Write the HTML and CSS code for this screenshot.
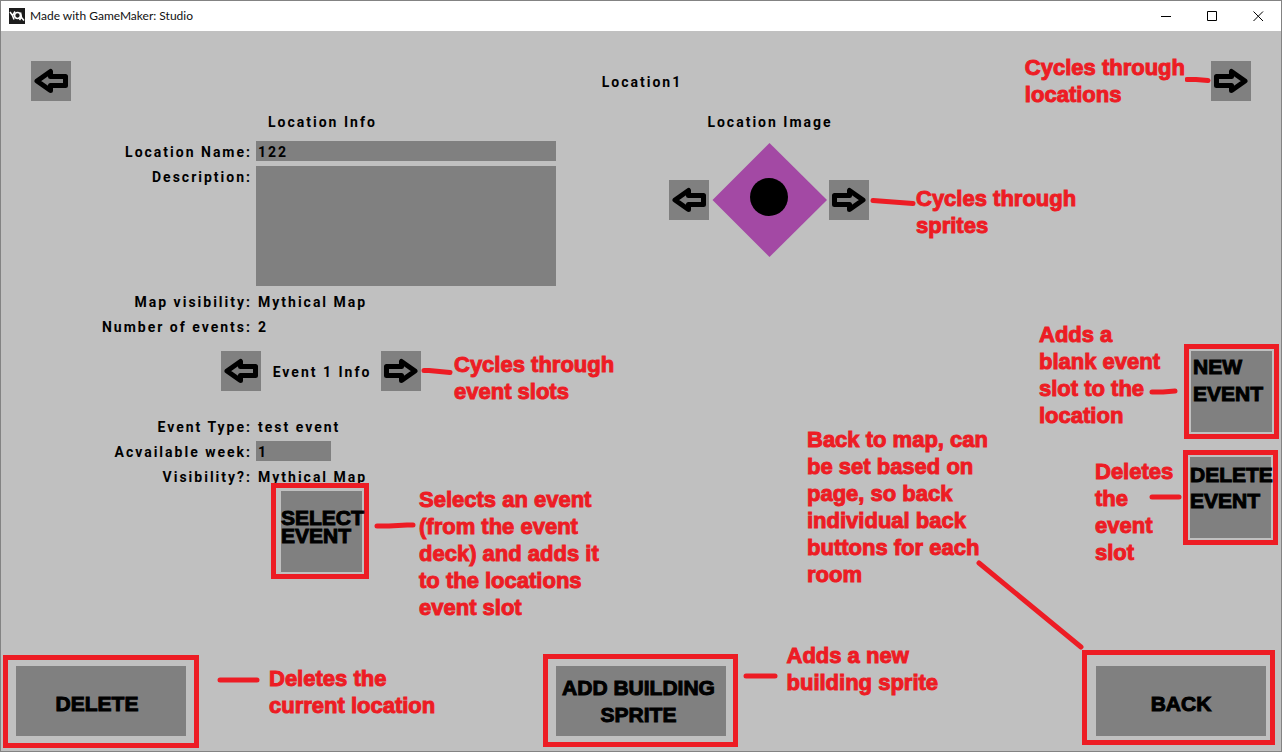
FILE: index.html
```html
<!DOCTYPE html>
<html lang="en">
<head>
<meta charset="utf-8">
<title>Made with GameMaker: Studio</title>
<link rel="stylesheet" href="styles.css">
</head>
<body>
<svg class="defs" aria-hidden="true">
  <symbol id="arrow-left" viewBox="0 0 40 40">
    <path d="M6 20 19.500 10.500V15.500H34.500V24.500H19.500V29.500Z" fill="none" stroke="#000" stroke-width="5" stroke-linejoin="round"/>
  </symbol>
  <symbol id="arrow-right" viewBox="0 0 40 40">
    <path d="M34 20 20.500 10.500V15.500H5.500V24.500H20.500V29.500Z" fill="none" stroke="#000" stroke-width="5" stroke-linejoin="round"/>
  </symbol>
</svg>
<div class="window">
  <header class="titlebar">
    <svg class="app-icon" viewBox="0 0 16 16" aria-hidden="true">
      <rect width="16" height="16" fill="#1c1c1c"/>
      <path d="M1 4l2.500 3.500M6 3.500L3.500 7.500 5 11.500" fill="none" stroke="#fff" stroke-width="1.500"/>
      <circle cx="8.500" cy="7.500" r="3" fill="none" stroke="#fff" stroke-width="1.700"/>
      <path d="M11.500 4.500l1 5 2.500 3M10.500 12l2-3" fill="none" stroke="#fff" stroke-width="1.500"/>
    </svg>
    <span class="app-title">Made with GameMaker: Studio</span>
    <div class="controls">
      <button class="control" aria-label="Minimize"><svg viewBox="0 0 11 11"><path d="M0 5.500h10"/></svg></button>
      <button class="control" aria-label="Maximize"><svg viewBox="0 0 11 11"><path d="M.5.500h9v9h-9z"/></svg></button>
      <button class="control" aria-label="Close"><svg viewBox="0 0 11 11"><path d="M.5.500l9.500 9.500M10 .5L.5 10"/></svg></button>
    </div>
  </header>

  <main class="stage">
    <div class="location-bar">
      <button class="arrow" aria-label="Previous location"><svg><use href="#arrow-left"/></svg></button>
      <h1 class="text location-title">Location1</h1>
      <div class="location-next">
        <p class="note">Cycles through<br>locations</p>
        <svg class="dash dash-location" viewBox="0 0 26 8"><path d="M2 2.500h9l12 1"/></svg>
        <button class="arrow" aria-label="Next location"><svg><use href="#arrow-right"/></svg></button>
      </div>
    </div>

    <div class="columns">
      <section class="info">
        <h2 class="text info-title">Location Info</h2>
        <div class="fields">
          <label class="text" for="name">Location Name:</label>
          <input class="text box" id="name" value="122">
          <label class="text" for="description">Description:</label>
          <textarea class="text box description" id="description"></textarea>
          <span class="text">Map visibility:</span><span class="text value">Mythical Map</span>
          <span class="text">Number of events:</span><span class="text value">2</span>
        </div>
        <div class="event-nav">
          <button class="arrow" aria-label="Previous event"><svg><use href="#arrow-left"/></svg></button>
          <h2 class="text event-title">Event 1 Info</h2>
          <button class="arrow" aria-label="Next event"><svg><use href="#arrow-right"/></svg></button>
          <svg class="dash dash-event" viewBox="0 0 33 40"><path d="M3 19.500h5l21 2"/></svg>
          <p class="note">Cycles through<br>event slots</p>
        </div>
        <div class="fields">
          <span class="text">Event Type:</span><span class="text value">test event</span>
          <label class="text" for="week">Acvailable week:</label>
          <input class="text box week" id="week" value="1">
          <span class="text">Visibility?:</span><span class="text value">Mythical Map</span>
        </div>
        <div class="select-row">
          <div class="frame frame-select"><button class="action square select">SELECT<br>EVENT</button></div>
          <svg class="dash dash-select" viewBox="0 0 50 8"><path d="M8 5h12l18-1h6"/></svg>
          <p class="note note-select">Selects an event<br>(from the event<br>deck) and adds it<br>to the locations<br>event slot</p>
        </div>
      </section>

      <section class="side">
        <div class="sprite">
          <h2 class="text sprite-title">Location Image</h2>
          <div class="sprite-row">
            <button class="arrow" aria-label="Previous sprite"><svg><use href="#arrow-left"/></svg></button>
            <svg class="preview" viewBox="0 0 120 116" role="img" aria-label="Purple diamond with a black circle">
              <path d="M60.500 1L118 58 60.500 115 3.500 58Z" fill="#a349a4"/>
              <circle cx="60" cy="55" r="19"/>
            </svg>
            <button class="arrow" aria-label="Next sprite"><svg><use href="#arrow-right"/></svg></button>
            <svg class="dash dash-sprite" viewBox="0 0 47 40"><path d="M4 20.500l40 3"/></svg>
            <p class="note note-sprite">Cycles through<br>sprites</p>
          </div>
        </div>
        <div class="side-lower">
          <p class="note note-back">Back to map, can<br>be set based on<br>page, so back<br>individual back<br>buttons for each<br>room</p>
          <div class="event-actions">
            <div class="event-action">
              <p class="note note-new">Adds a<br>blank event<br>slot to the<br>location</p>
              <svg class="dash dash-new" viewBox="0 0 30 8"><path d="M3 5h11l12-1"/></svg>
              <div class="frame frame-new"><button class="action square new">NEW<br>EVENT</button></div>
            </div>
            <div class="event-action event-remove">
              <p class="note note-remove">Deletes<br>the<br>event<br>slot</p>
              <svg class="dash dash-remove" viewBox="0 0 34 8"><path d="M3 4h27"/></svg>
              <div class="frame frame-remove"><button class="action square remove">DELETE<br>EVENT</button></div>
            </div>
          </div>
        </div>
      </section>
    </div>

    <footer class="footer">
      <div class="footer-group">
        <div class="frame frame-delete"><button class="action wide delete">DELETE</button></div>
        <svg class="dash dash-delete" viewBox="0 0 70 8"><path d="M21 4h37"/></svg>
        <p class="note note-delete">Deletes the<br>current location</p>
      </div>
      <div class="frame frame-add"><button class="action wide add">ADD BUILDING<br>SPRITE</button></div>
      <div class="footer-group footer-end">
        <svg class="dash dash-add" viewBox="0 0 49 8"><path d="M8 4h29"/></svg>
        <p class="note note-add">Adds a new<br>building sprite</p>
        <div class="frame frame-back">
          <svg class="back-line" viewBox="0 0 110 92"><path d="M4 4l102 84"/></svg>
          <button class="action wide back">BACK</button>
        </div>
      </div>
    </footer>
  </main>
</div>
</body>
</html>
```
FILE: styles.css
```css
* { box-sizing: border-box; }
body { margin: 0; background: #c0c0c0; }
h1, h2, p { margin: 0; }
button, input, textarea { border: 0; border-radius: 0; padding: 0; margin: 0; }
.defs { position: absolute; width: 0; height: 0; }

.window {
  min-height: 100vh;
  display: flex;
  flex-direction: column;
  border: 1px solid #838383;
}

/* Title bar */
.titlebar {
  display: flex;
  align-items: center;
  height: 30px;
  padding-left: 8px;
  gap: 5px;
  background: #fff;
}
.app-icon { width: 16px; height: 16px; }
.app-title { font: 12px/16px Lato, sans-serif; color: #111; }
.controls { display: flex; margin-left: auto; }
.control { width: 46px; height: 30px; display: grid; place-items: center; background: none; }
.control svg { width: 11px; height: 11px; fill: none; stroke: #000; stroke-width: 1; }

/* Shared pieces */
.stage {
  flex: 1;
  display: flex;
  flex-direction: column;
  padding-bottom: 3px;
}
.text {
  font: 700 14px/22px Roboto, sans-serif;
  letter-spacing: 2px;
  color: #000;
}
.arrow { flex: none; width: 40px; height: 40px; background: #808080; }
.arrow svg { display: block; width: 40px; height: 40px; }
.note, .action {
  font: 700 21px/27px "Liberation Sans", Arial, sans-serif;
  -webkit-text-stroke: 1px currentColor;
  white-space: nowrap;
}
.note { font-size: 22px; color: #ed1c24; }
.dash {
  flex: none;
  height: 8px;
  fill: none;
  stroke: #ed1c24;
  stroke-width: 5;
  stroke-linecap: round;
  stroke-linejoin: round;
}
.frame { flex: none; position: relative; border: 5px solid #ed1c24; }
.action { display: block; background: #808080; color: #000; }
.square { width: 81px; height: 81px; text-align: left; }
.wide { width: 170px; height: 70px; }

/* Location switcher */
.location-bar {
  display: grid;
  grid-template-columns: 1fr auto 1fr;
  align-items: center;
  padding: 23px 30px 0;
}
.location-title { padding: 2px 0 0 2px; }
.location-next { display: flex; align-items: center; justify-content: flex-end; }
.dash-location { width: 26px; }

.columns { display: grid; grid-template-columns: 1fr 1fr; padding-top: 3px; }

/* Location and event fields */
.info-title { padding-left: 267px; white-space: nowrap; }
.fields {
  display: grid;
  grid-template-columns: 251px 300px;
  align-items: start;
  column-gap: 4px;
  row-gap: 3px;
  padding-top: 8px;
}
.fields > :nth-child(odd) { text-align: right; }
.box { width: 100%; height: 20px; padding: 2px 0 0 2px; line-height: 18px; background: #808080; }
.description { display: block; height: 120px; margin-bottom: 2px; resize: none; }
.week { width: 75px; }
.value { padding-left: 2px; }
.event-nav { display: flex; align-items: flex-start; padding: 13px 0 3px 220px; }
.event-title { width: 120px; padding: 10px 0 0 2px; text-align: center; white-space: nowrap; }
.dash-event { width: 33px; height: 40px; }

.select-row { display: flex; align-items: flex-start; padding-left: 270px; }
.frame-select { margin-top: -5px; padding: 3px 2px 2px 5px; }
.select { padding-bottom: 10px; line-height: 18px; }
.dash-select { width: 50px; margin-top: 33px; }
.note-select { margin-top: -2px; }

/* Sprite picker */
.sprite { padding-left: 28px; }
.sprite-title { width: 200px; padding-left: 2px; text-align: center; white-space: nowrap; }
.sprite-row { display: flex; align-items: center; padding-top: 9px; }
.preview { width: 120px; height: 116px; }
.dash-sprite { width: 47px; height: 40px; }
.note-sprite { padding-top: 24px; }

/* Event actions */
.side-lower { display: flex; justify-content: space-between; padding: 63px 2px 0 166px; }
.note-back { padding-top: 105px; }
.event-action { display: flex; align-items: flex-start; }
.event-remove { justify-content: flex-end; padding: 11px 1px 0 0; }
.frame-new { margin-top: 23px; padding: 2px; }
.frame-remove { padding: 2px; }
.note-new { width: 110px; }
.note-remove { width: 54px; padding-top: 8px; }
.dash-new { width: 30px; margin: 66px 5px 0 0; }
.dash-remove { width: 34px; margin-top: 43px; }
.new { padding: 0 0 23px 2px; }
.remove { padding-bottom: 19px; line-height: 26px; }

/* Room actions */
.footer {
  display: grid;
  grid-template-columns: 1fr auto 1fr;
  align-items: end;
  margin-top: auto;
  padding-right: 2px;
}
.footer-group { display: flex; align-items: center; }
.footer-end { align-items: flex-end; }
.frame-delete { margin-left: 2px; padding: 6px 8px 7px; }
.frame-add { margin-bottom: 1px; padding: 7px 7px 6px 8px; }
.frame-back { margin: 0 4px 3px auto; padding: 11px 4px 4px 9px; }
.delete { padding: 5px 8px 0 0; }
.add { padding-right: 4px; }
.back { padding-top: 4px; }
.dash-delete { width: 70px; margin-top: -44px; }
.note-delete { margin-top: -20px; }
.dash-add { width: 49px; margin-bottom: 68px; }
.note-add { padding-bottom: 52px; }
.back-line {
  position: absolute;
  right: 100%;
  bottom: 100%;
  width: 110px;
  height: 92px;
  margin: 0 2px 4px 0;
  fill: none;
  stroke: #ed1c24;
  stroke-width: 5;
  stroke-linecap: round;
}
```
